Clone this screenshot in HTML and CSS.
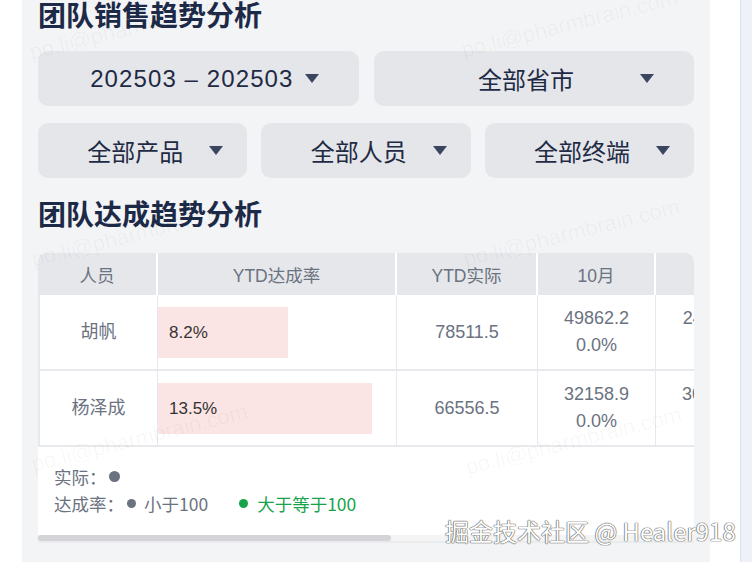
FILE: index.html
```html
<!DOCTYPE html>
<html lang="zh-CN">
<head>
<meta charset="utf-8">
<title>团队销售趋势分析</title>
<link rel="stylesheet" href="styles.css">
</head>
<body>
<div class="page">
  <div class="gutter"></div>
  <main class="panel">
    <h1 class="title">团队销售趋势分析</h1>
    <div class="filters filters-2">
      <div class="select sel-date"><span class="sel-text">202503 – 202503</span><span class="caret"></span></div>
      <div class="select sel-area"><span class="sel-text">全部省市</span><span class="caret"></span></div>
    </div>
    <div class="filters filters-3">
      <div class="select sel-small"><span class="sel-text">全部产品</span><span class="caret"></span></div>
      <div class="select sel-small"><span class="sel-text">全部人员</span><span class="caret"></span></div>
      <div class="select sel-small"><span class="sel-text">全部终端</span><span class="caret"></span></div>
    </div>
    <h2 class="title title-2">团队达成趋势分析</h2>
    <section class="card">
      <div class="table-wrap">
        <table class="grid">
          <colgroup>
            <col class="c1"><col class="c2"><col class="c3"><col class="c4"><col class="c5"><col class="c6">
          </colgroup>
          <thead>
            <tr><th>人员</th><th>YTD达成率</th><th>YTD实际</th><th>10月</th><th>11月</th><th>12月</th></tr>
          </thead>
          <tbody>
            <tr>
              <td>胡帆</td>
              <td class="rate"><div class="bar" style="width:130px">8.2%</div></td>
              <td>78511.5</td>
              <td class="two">49862.2<br>0.0%</td>
              <td class="two">24112.6<br>0.0%</td>
              <td class="two">4536.7<br>0.0%</td>
            </tr>
            <tr>
              <td>杨泽成</td>
              <td class="rate"><div class="bar" style="width:214px">13.5%</div></td>
              <td>66556.5</td>
              <td class="two">32158.9<br>0.0%</td>
              <td class="two">30125.4<br>0.0%</td>
              <td class="two">4272.2<br>0.0%</td>
            </tr>
          </tbody>
        </table>
      </div>
      <div class="legend">
        <div class="legend-line">实际：<span class="dot dot-actual"></span></div>
        <div class="legend-line">达成率：<span class="dot dot-grey"></span>小于100<span class="dot dot-green"></span><span class="green">大于等于100</span></div>
      </div>
      <div class="scrollbar"><div class="thumb"></div></div>
    </section>
  </main>
  <div class="spacer"></div>
  <div class="rail"></div>

  <div class="watermarks">
    <span class="wm" style="left:30px;top:40px">po.li@pharmbrain.com</span>
    <span class="wm" style="left:462px;top:38px">po.li@pharmbrain.com</span>
    <span class="wm" style="left:32px;top:247px">po.li@pharmbrain.com</span>
    <span class="wm" style="left:464px;top:247px">po.li@pharmbrain.com</span>
    <span class="wm" style="left:32px;top:452px">po.li@pharmbrain.com</span>
    <span class="wm" style="left:466px;top:455px">po.li@pharmbrain.com</span>
  </div>
  <div class="credit">掘金技术社区 @ Healer918</div>
</div>
</body>
</html>
```

FILE: styles.css
```css
* { box-sizing: border-box; }
html, body { margin: 0; padding: 0; }
body {
  width: 752px;
  height: 562px;
  overflow: hidden;
  background: #ffffff;
  font-family: "Liberation Sans", "Noto Sans CJK SC", sans-serif;
}
.page {
  position: relative;
  display: flex;
  width: 752px;
  height: 562px;
  overflow: hidden;
}
.gutter { width: 22px; flex: none; background: #ffffff; }
.panel {
  width: 688px;
  flex: none;
  background: #f3f4f6;
  padding: 0 16px;
}
.spacer { width: 30px; flex: none; background: #ffffff; }
.rail {
  flex: 1;
  background: #eef2f8;
  border-left: 1px solid #dde3ec;
}
.title {
  margin: -3px 0 0;
  font-size: 28px;
  line-height: 34px;
  font-weight: 700;
  color: #1c2a48;
  font-family: "Noto Sans CJK SC", sans-serif;
}
.title-2 { margin-top: 18px; }
.filters { display: grid; gap: 15px; }
.filters-2 { grid-template-columns: 1fr 1fr; margin-top: 20px; }
.filters-3 { grid-template-columns: 1fr 1fr 1fr; gap: 14px; margin-top: 17px; }
.select {
  height: 55px;
  background: #e4e6ea;
  border-radius: 10px;
  display: flex;
  align-items: center;
  justify-content: flex-end;
  color: #1f2a44;
  font-size: 24px;
}
.sel-text { font-family: "Liberation Sans", "Noto Sans CJK SC", sans-serif; }
.caret {
  width: 0; height: 0;
  border-left: 7px solid transparent;
  border-right: 7px solid transparent;
  border-top: 9px solid #3b4560;
}
.sel-date { padding-right: 40px; gap: 11px; }
.sel-date .sel-text { font-size: 24px; letter-spacing: 1.1px; }
.sel-area { padding-right: 40px; gap: 66px; }
.sel-small { padding-right: 24px; gap: 26px; }

.card {
  margin-top: 23px;
  background: #ffffff;
  border-radius: 8px 8px 0 0;
  overflow: hidden;
  box-shadow: 0 2px 1px rgba(0,0,0,0.04);
}
.table-wrap { overflow: hidden; }
.grid {
  border-collapse: separate;
  border-spacing: 0;
  table-layout: fixed;
  width: 856px;
  font-size: 18px;
  color: #6b7280;
}
.c1 { width: 120px; } .c2 { width: 239px; } .c3 { width: 141px; }
.c4 { width: 118px; } .c5 { width: 118px; } .c6 { width: 120px; }
.grid th {
  height: 42px;
  background: #e5e7eb;
  font-weight: 400;
  font-size: 17.5px;
  color: #6b7280;
  border-right: 2px solid #ffffff;
  text-align: center;
  padding: 0;
}
.grid td {
  height: 76px;
  text-align: center;
  vertical-align: middle;
  border-right: 1px solid #e8e9ec;
  border-bottom: 2px solid #e8e9ec;
  padding: 0;
  line-height: 27px;
}
.grid td:first-child { border-left: 2px solid #e8e9ec; }
.grid td.rate { text-align: left; padding-left: 0; }
.bar {
  height: 51px;
  background: #fbe4e4;
  color: #333333;
  font-size: 17px;
  display: flex;
  align-items: center;
  padding-left: 11px;
}
.legend {
  padding: 16px 16px 18px;
  font-size: 17.5px;
  line-height: 27px;
  color: #6b7280;
  font-family: "Noto Sans CJK SC", sans-serif;
}
.legend-line { display: flex; align-items: center; }
.dot { display: inline-block; border-radius: 50%; flex: none; }
.dot-actual { width: 11px; height: 11px; background: #6b7280; margin-left: 2px; }
.dot-grey { width: 9px; height: 9px; background: #6b7280; margin: 0 8px 0 3px; }
.dot-green { width: 9px; height: 9px; background: #16a34a; margin: 0 9px 0 31px; }
.green { color: #16a34a; }
.scrollbar { height: 6px; background: #f4f4f5; }
.thumb { width: 353px; height: 6px; background: #d4d4d8; border-radius: 3px; }

.watermarks { position: absolute; inset: 0; pointer-events: none; }
.wm {
  position: absolute;
  font-size: 22px;
  color: rgba(0,0,0,0.035);
  transform: rotate(-14deg);
  transform-origin: left center;
  white-space: nowrap;
  font-family: "Liberation Sans", sans-serif;
}
.credit {
  position: absolute;
  left: 445px;
  top: 513px;
  font-size: 24px;
  color: #ffffff;
  font-family: "Noto Sans CJK SC", sans-serif;
  white-space: nowrap;
  text-shadow: 0 0 1px #555, 0 0 1px #555, 0 0 1px #555;
}
```
